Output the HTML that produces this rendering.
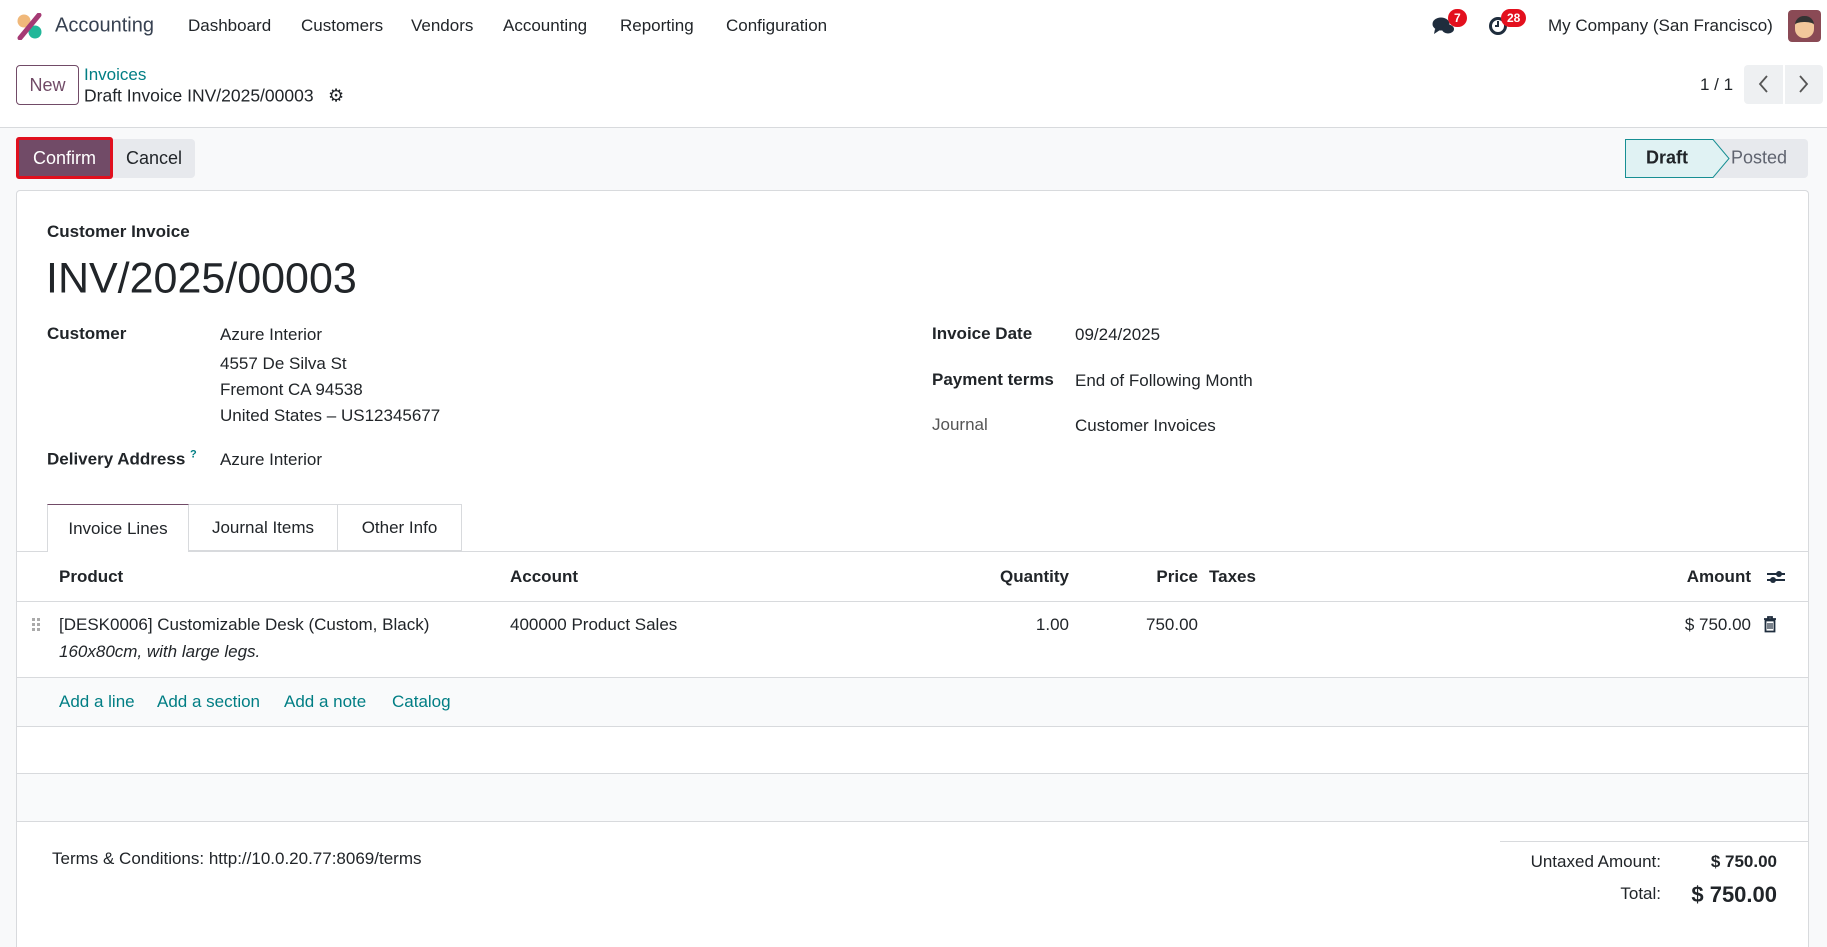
<!DOCTYPE html>
<html style="width:1827px;height:947px;overflow:hidden"><head><meta charset="utf-8"><style>
*{box-sizing:border-box;margin:0;padding:0}
body{width:1827px;height:947px;overflow:hidden;background:#fff;font-family:"Liberation Sans",sans-serif;color:#212529;font-size:17px;position:relative}
.a{position:absolute;white-space:nowrap}
.b{font-weight:bold}
.t{color:#017e84}
.vc{transform:translateY(-50%)}
.r{transform:translate(-100%,-50%)}
.hl{position:absolute;height:1px;background:#d8dadd}
</style></head><body>
<!-- navbar -->
<svg class="a" style="left:16px;top:13px" width="27" height="27" viewBox="0 0 27 27"><circle cx="8" cy="8" r="6.5" fill="#f0b87a"/><circle cx="19" cy="19" r="6.5" fill="#21b799"/><path d="M4 25 L23 2" stroke="#a53a74" stroke-width="5" stroke-linecap="round"/></svg>
<div class="a vc" style="left:55px;top:26px;font-size:20px;color:#374151">Accounting</div>
<div class="a vc" style="left:188px;top:26px">Dashboard</div>
<div class="a vc" style="left:301px;top:26px">Customers</div>
<div class="a vc" style="left:411px;top:26px">Vendors</div>
<div class="a vc" style="left:503px;top:26px">Accounting</div>
<div class="a vc" style="left:620px;top:26px">Reporting</div>
<div class="a vc" style="left:726px;top:26px">Configuration</div>
<svg class="a" style="left:1432px;top:16px" width="24" height="20" viewBox="0 0 24 20"><ellipse cx="9" cy="8" rx="8.5" ry="6.5" fill="#1f2d3d"/><path d="M3 13 L2 18 L8 14Z" fill="#1f2d3d"/><ellipse cx="16" cy="13" rx="6" ry="4.5" fill="#1f2d3d"/></svg>
<div class="a" style="left:1448px;top:9px;background:#e3101e;color:#fff;border-radius:10px;font-size:12px;font-weight:bold;padding:2px 6px">7</div>
<svg class="a" style="left:1488px;top:16px" width="20" height="20" viewBox="0 0 20 20"><circle cx="10" cy="10" r="7.5" fill="none" stroke="#1f2d3d" stroke-width="3"/><path d="M10 5v5h-3" stroke="#1f2d3d" stroke-width="2" fill="none"/></svg>
<div class="a" style="left:1501px;top:9px;background:#e3101e;color:#fff;border-radius:10px;font-size:12px;font-weight:bold;padding:2px 6px">28</div>
<div class="a vc" style="left:1548px;top:26px">My Company (San Francisco)</div>
<div class="a" style="left:1788px;top:10px;width:33px;height:32px;border-radius:4px;background:#8a4a55"><div style="position:absolute;left:7px;top:6px;width:19px;height:22px;border-radius:9px;background:#f2c79b;border-top:6px solid #333"></div></div>
<!-- control panel -->
<div class="a" style="left:16px;top:65px;width:63px;height:40px;border:1px solid #714b67;border-radius:4px;color:#714b67;font-size:18px;text-align:center;line-height:38px">New</div>
<div class="a vc t" style="left:84px;top:75px;font-size:17px">Invoices</div>
<div class="a vc" style="left:84px;top:96px;font-size:17.5px">Draft Invoice INV/2025/00003</div>
<div class="a vc" style="left:328px;top:96px;font-size:18px">⚙</div>
<div class="a vc" style="left:1700px;top:85px">1 / 1</div>
<div class="a" style="left:1744px;top:65px;width:39px;height:39px;background:#eef0f2;border-radius:4px 0 0 4px"></div>
<div class="a" style="left:1785px;top:65px;width:38px;height:39px;background:#eef0f2;border-radius:0 4px 4px 0"></div>
<svg class="a" style="left:1757px;top:74px" width="12" height="20"><path d="M10 2 L3 10 L10 18" stroke="#555" stroke-width="1.8" fill="none"/></svg>
<svg class="a" style="left:1798px;top:74px" width="12" height="20"><path d="M2 2 L9 10 L2 18" stroke="#555" stroke-width="1.8" fill="none"/></svg>
<div class="hl" style="left:0;top:127px;width:1827px"></div>
<div class="a" style="left:0;top:128px;width:1827px;height:819px;background:#f8f9fa"></div>
<div class="a" style="left:16px;top:137px;width:97px;height:42px;border:3px solid #e0101e;border-radius:3px;background:#714b67;color:#fff;font-size:18px;text-align:center;line-height:36px">Confirm</div>
<div class="a" style="left:113px;top:139px;width:82px;height:39px;background:#e7e9ed;border-radius:0 4px 4px 0;text-align:center;line-height:39px;font-size:18px">Cancel</div>
<div class="a" style="left:1625px;top:139px;width:183px;height:39px;background:#e7e9ed;border-radius:4px"></div>
<svg class="a" style="left:1625px;top:139px" width="106" height="39" viewBox="0 0 106 39"><path d="M0.5 0.5 H88 L104 19.5 L88 38.5 H0.5Z" fill="#e0f2f3" stroke="#178f93"/></svg>
<div class="a vc b" style="left:1646px;top:158px;font-size:18px">Draft</div>
<div class="a vc" style="left:1731px;top:158px;font-size:18px;color:#5f636f">Posted</div>
<!-- sheet -->
<div class="a" style="left:16px;top:190px;width:1793px;height:757px;background:#fff;border:1px solid #d8dadd;border-bottom:none;border-radius:4px 4px 0 0"></div>
<div class="a vc" style="left:47px;top:232px;font-weight:bold;font-size:17px">Customer Invoice</div>
<div class="a vc" style="left:46px;top:279px;font-size:43px">INV/2025/00003</div>
<div class="a vc b" style="left:47px;top:334px">Customer</div>
<div class="a vc" style="left:220px;top:335px">Azure Interior</div>
<div class="a vc" style="left:220px;top:364px">4557 De Silva St</div>
<div class="a vc" style="left:220px;top:390px">Fremont CA 94538</div>
<div class="a vc" style="left:220px;top:416px">United States – US12345677</div>
<div class="a vc b" style="left:47px;top:459px">Delivery Address <sup class="t" style="font-size:11px">?</sup></div>
<div class="a vc" style="left:220px;top:460px">Azure Interior</div>
<div class="a vc b" style="left:932px;top:334px">Invoice Date</div>
<div class="a vc" style="left:1075px;top:335px">09/24/2025</div>
<div class="a vc b" style="left:932px;top:380px">Payment terms</div>
<div class="a vc" style="left:1075px;top:381px">End of Following Month</div>
<div class="a vc" style="left:932px;top:425px;color:#555">Journal</div>
<div class="a vc" style="left:1075px;top:426px">Customer Invoices</div>
<!-- tabs -->
<div class="hl" style="left:17px;top:551px;width:1791px"></div>
<div class="a" style="left:47px;top:504px;width:142px;height:48px;border:1px solid #d8dadd;border-top:1px solid #714b67;border-bottom:none;background:#fff;text-align:center;line-height:47px">Invoice Lines</div>
<div class="a" style="left:189px;top:504px;width:149px;height:47px;border:1px solid #d8dadd;border-left:none;text-align:center;line-height:46px">Journal Items</div>
<div class="a" style="left:338px;top:504px;width:124px;height:47px;border:1px solid #d8dadd;border-left:none;text-align:center;line-height:46px">Other Info</div>
<!-- table -->
<div class="a vc b" style="left:59px;top:577px">Product</div>
<div class="a vc b" style="left:510px;top:577px">Account</div>
<div class="a r b" style="left:1069px;top:577px">Quantity</div>
<div class="a r b" style="left:1198px;top:577px">Price</div>
<div class="a vc b" style="left:1209px;top:577px">Taxes</div>
<div class="a r b" style="left:1751px;top:577px">Amount</div>
<svg class="a" style="left:1766px;top:568px" width="20" height="18" viewBox="0 0 20 18"><path d="M1 6H19M1 12H19" stroke="#1f2d3d" stroke-width="2"/><circle cx="13" cy="6" r="3" fill="#1f2d3d"/><circle cx="7" cy="12" r="3" fill="#1f2d3d"/></svg>
<div class="hl" style="left:17px;top:601px;width:1791px"></div>
<svg class="a" style="left:32px;top:618px" width="9" height="14"><g fill="#aaa"><rect x="0" y="0" width="3" height="3"/><rect x="5" y="0" width="3" height="3"/><rect x="0" y="5" width="3" height="3"/><rect x="5" y="5" width="3" height="3"/><rect x="0" y="10" width="3" height="3"/><rect x="5" y="10" width="3" height="3"/></g></svg>
<div class="a vc" style="left:59px;top:625px">[DESK0006] Customizable Desk (Custom, Black)</div>
<div class="a vc" style="left:59px;top:652px;font-style:italic">160x80cm, with large legs.</div>
<div class="a vc" style="left:510px;top:625px">400000 Product Sales</div>
<div class="a r" style="left:1069px;top:625px">1.00</div>
<div class="a r" style="left:1198px;top:625px">750.00</div>
<div class="a r" style="left:1751px;top:625px">$ 750.00</div>
<svg class="a" style="left:1763px;top:616px" width="14" height="17" viewBox="0 0 14 17"><path d="M1 3H13M5 3V1H9V3M2.5 4.5V15.5H11.5V4.5Z" stroke="#1f2d3d" stroke-width="1.8" fill="none"/><path d="M5 7V13M7 7V13M9 7V13" stroke="#1f2d3d" stroke-width="1.2"/></svg>
<div class="hl" style="left:17px;top:677px;width:1791px"></div>
<div class="a" style="left:17px;top:678px;width:1791px;height:48px;background:#f9fafb"></div>
<div class="a vc t" style="left:59px;top:702px">Add a line</div>
<div class="a vc t" style="left:157px;top:702px">Add a section</div>
<div class="a vc t" style="left:284px;top:702px">Add a note</div>
<div class="a vc t" style="left:392px;top:702px">Catalog</div>
<div class="hl" style="left:17px;top:726px;width:1791px"></div>
<div class="hl" style="left:17px;top:773px;width:1791px"></div>
<div class="a" style="left:17px;top:774px;width:1791px;height:47px;background:#f9fafb"></div>
<div class="hl" style="left:17px;top:821px;width:1791px"></div>
<div class="a vc" style="left:52px;top:859px">Terms &amp; Conditions: http://10.0.20.77:8069/terms</div>
<div class="hl" style="left:1500px;top:841px;width:308px"></div>
<div class="a r" style="left:1661px;top:862px">Untaxed Amount:</div>
<div class="a r b" style="left:1777px;top:862px">$ 750.00</div>
<div class="a r" style="left:1661px;top:894px">Total:</div>
<div class="a r b" style="left:1777px;top:895px;font-size:22px">$ 750.00</div>
</body></html>
